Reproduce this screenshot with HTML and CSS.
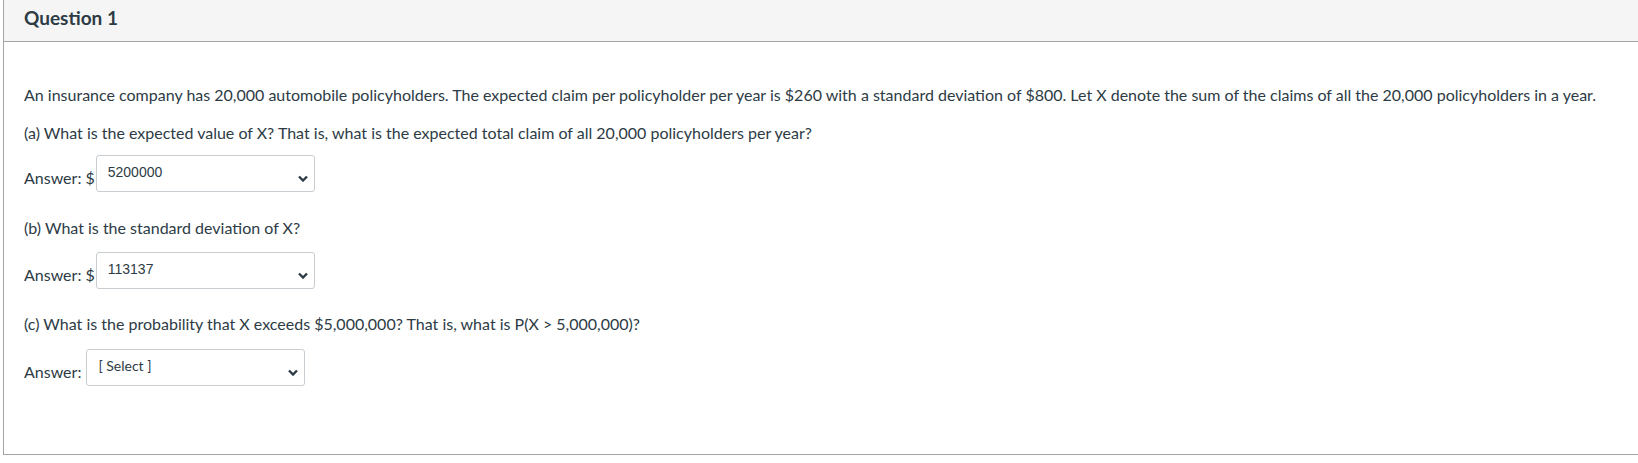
FILE: index.html
```html
<!DOCTYPE html>
<html>
<head>
    <title>Question 1</title>
    <link rel="stylesheet" href="styles.css">
</head>
<body>
    <div class="question">
        <div class="question__header">
            <span class="question__name">Question 1</span>
        </div>
        <div class="question__text">
            <p class="question__intro">An insurance company has 20,000 automobile policyholders. The expected claim per policyholder per year is $260 with a standard deviation of $800. Let X denote the sum of the claims of all the 20,000 policyholders in a year.</p>
            <p class="question__part">(a) What is the expected value of X? That is, what is the expected total claim of all 20,000 policyholders per year?</p>
            <div class="answer">
                <span class="answer__label">Answer: $</span>
                <div class="answer__select"><span class="answer__value">5200000</span><svg class="answer__arrow" viewBox="0 0 10 6"><path d="M1 1 L5 5 L9 1" /></svg></div>
            </div>
            <p class="question__part question__part--b">(b) What is the standard deviation of X?</p>
            <div class="answer answer--b">
                <span class="answer__label">Answer: $</span>
                <div class="answer__select"><span class="answer__value">113137</span><svg class="answer__arrow" viewBox="0 0 10 6"><path d="M1 1 L5 5 L9 1" /></svg></div>
            </div>
            <p class="question__part question__part--c">(c) What is the probability that X exceeds $5,000,000? That is, what is P(X &gt; 5,000,000)?</p>
            <div class="answer">
                <span class="answer__label answer__label--plain">Answer:</span>
                <div class="answer__select"><span class="answer__value answer__value--empty">[ Select ]</span><svg class="answer__arrow" viewBox="0 0 10 6"><path d="M1 1 L5 5 L9 1" /></svg></div>
            </div>
        </div>
    </div>
</body>
</html>
```

FILE: styles.css
```css
* {
    margin: 0;
    padding: 0;
    box-sizing: border-box;
}
body {
    font-family: Lato, "Noto Sans", sans-serif;
    color: #2d3b45;
    background: #fff;
    overflow: hidden;
}
.question {
    margin-left: 3px;
    width: 1700px;
    height: 455px;
    border-left: 1px solid #a5a5a5;
    border-bottom: 1px solid #a5a5a5;
}
.question__header {
    height: 42px;
    padding: 6px 0 0 20px;
    background: #f5f5f5;
    border-bottom: 1px solid #a5a5a5;
}
.question__name {
    font-size: 19px;
    font-weight: bold;
}
.question__text {
    padding: 43px 0 0 20px;
    font-size: 16px;
    line-height: 20px;
}
.question__intro {
    margin-bottom: 18px;
}
.question__part {
    margin-bottom: 12px;
}
.question__part--b {
    margin-bottom: 14px;
}
.question__part--c {
    margin-bottom: 15px;
}
.answer {
    display: flex;
    align-items: flex-end;
    margin-bottom: 26px;
}
.answer--b {
    margin-bottom: 25px;
}
.answer__label {
    padding-bottom: 4px;
    margin-right: 1px;
}
.answer__label--plain {
    margin-right: 5px;
}
.answer__select {
    display: flex;
    justify-content: space-between;
    width: 219px;
    height: 37px;
    padding: 8px 6px 0 11px;
    border: 1px solid #c7cdd1;
    border-radius: 3px;
}
.answer__value {
    font-family: "Liberation Sans", Arial, sans-serif;
    font-size: 14px;
    line-height: 16px;
}
.answer__value--empty {
    font-family: Lato, sans-serif;
    font-size: 14px;
}
.answer__arrow {
    width: 10px;
    height: 7px;
    margin-top: 11px;
    fill: none;
    stroke: #2d3b45;
    stroke-width: 2.4;
}
```
